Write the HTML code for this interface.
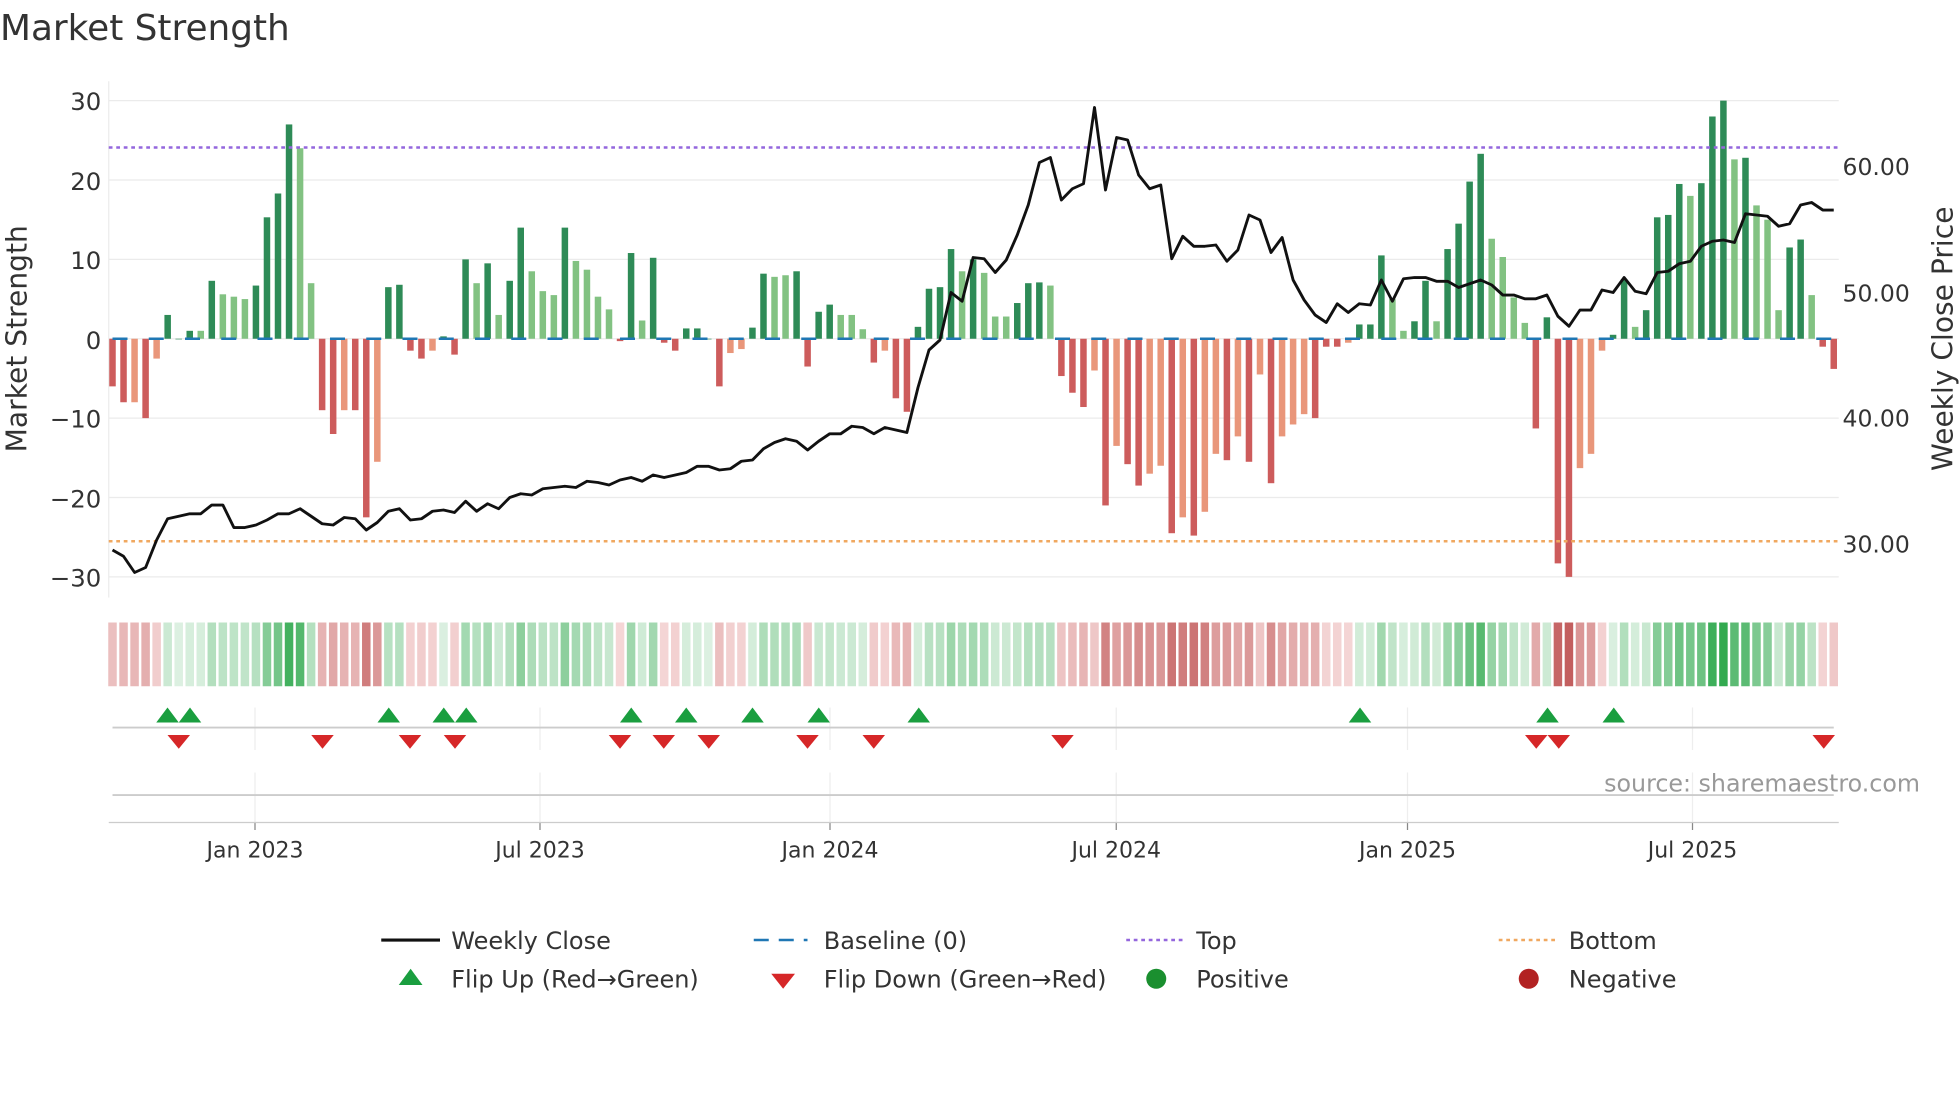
<!DOCTYPE html>
<html><head><meta charset="utf-8"><style>
html,body{margin:0;padding:0;background:#fff;}
svg{display:block;font-family:"DejaVu Sans","Liberation Sans",sans-serif;}
</style></head><body>
<svg id="s" width="1960" height="1102" viewBox="0 0 1568 881.6" xmlns="http://www.w3.org/2000/svg">
<text x="0" y="32" font-size="28.7" fill="#333">Market Strength</text>
<g id="grid"></g>
<g id="bars"></g>
<g id="strip"></g>
<g id="marks"></g>
<g id="line"></g>
<text transform="translate(21,271) rotate(-90)" text-anchor="middle" font-size="22.5" fill="#333">Market Strength</text>
<text transform="translate(1562,271) rotate(-90)" text-anchor="middle" font-size="22.5" fill="#333">Weekly Close Price</text>
<g font-size="19.5" fill="#333" text-anchor="end">
<text x="81" y="88">30</text><text x="81" y="152">20</text><text x="81" y="215">10</text><text x="81" y="279">0</text><text x="81" y="342">−10</text><text x="81" y="406">−20</text><text x="81" y="469">−30</text>
</g>
<g font-size="18.8" fill="#333">
<text x="1474" y="140">60.00</text><text x="1474" y="241">50.00</text><text x="1474" y="341">40.00</text><text x="1474" y="442">30.00</text>
</g>
<g font-size="17.6" fill="#333" text-anchor="middle">
<text x="204" y="686">Jan 2023</text><text x="432" y="686">Jul 2023</text><text x="664" y="686">Jan 2024</text><text x="893" y="686">Jul 2024</text><text x="1126" y="686">Jan 2025</text><text x="1354" y="686">Jul 2025</text>
</g>
<text x="1536" y="633" font-size="19" fill="#999" text-anchor="end">source: sharemaestro.com</text>
<g font-size="19.2" fill="#333">
<line x1="305" y1="752" x2="352" y2="752" stroke="#111" stroke-width="2.5"/><text x="361" y="759">Weekly Close</text>
<line x1="603" y1="752" x2="646" y2="752" stroke="#1f77b4" stroke-width="2" stroke-dasharray="12,8"/><text x="659" y="759">Baseline (0)</text>
<line x1="901" y1="752" x2="946" y2="752" stroke="#9467dd" stroke-width="2" stroke-dasharray="3,3"/><text x="957" y="759">Top</text>
<line x1="1199" y1="752" x2="1244" y2="752" stroke="#f0a860" stroke-width="2" stroke-dasharray="3,3"/><text x="1255" y="759">Bottom</text>
<polygon points="319,788 338,788 328.5,775" fill="#1a9e3f"/><text x="361" y="790">Flip Up (Red→Green)</text>
<polygon points="617,779 636,779 626.5,791" fill="#d62728"/><text x="659" y="790">Flip Down (Green→Red)</text>
<circle cx="925" cy="783" r="8" fill="#1a8f2f"/><text x="957" y="790">Positive</text>
<circle cx="1223" cy="783" r="8" fill="#b22222"/><text x="1255" y="790">Negative</text>
</g>
</svg>
<script>
var NS="http://www.w3.org/2000/svg";
function el(p,t,a){var e=document.createElementNS(NS,t);for(var k in a)e.setAttribute(k,a[k]);document.getElementById(p).appendChild(e);return e;}
var B="-6R -8R -8S -10R -2.5S 3D 0D 1D 1L 7.3D 5.6L 5.3L 5L 6.7D 15.3D 18.3D 27D 24L 7L -9R -12R -9S -9R -22.5R -15.5S 6.5D 6.8D -1.5R -2.5R -1.5S 0.3D -2R 10D 7L 9.5D 3L 7.3D 14D 8.5L 6L 5.5L 14D 9.8L 8.7L 5.3L 3.7L -0.3R 10.8D 2.3L 10.2D -0.5R -1.5R 1.3D 1.3D 0D -6R -1.8S -1.3S 1.4D 8.2D 7.8L 8L 8.5D -3.5R 3.4D 4.3D 3L 3L 1.2L -3R -1.5S -7.5R -9.2R 1.5D 6.3D 6.5D 11.3D 8.5L 10D 8.3L 2.8L 2.8L 4.5D 7D 7.1D 6.7L -4.7R -6.8R -8.6R -4S -21R -13.5S -15.8R -18.5R -17S -16S -24.5R -22.5S -24.8R -21.8S -14.5S -15.3R -12.3S -15.5R -4.5S -18.2R -12.3S -10.8S -9.5S -10R -1R -1R -0.5S 1.8D 1.8D 10.5D 5L 1L 2.2D 7.3D 2.2L 11.3D 14.5D 19.8D 23.3D 12.6L 10.3L 5.2L 2L -11.3R 2.7D -28.3R -30R -16.3S -14.5S -1.5S 0.5D 7.5D 1.5L 3.6D 15.3D 15.6D 19.5D 18L 19.6D 28D 30D 22.6L 22.8D 16.8L 15L 3.6L 11.5D 12.5D 5.5L -1R -3.8R".split(" ");
var n=B.length,x0=90,x1=1467,st=(x1-x0)/(n-1),Z=271,U=6.35;
var col={D:"#2e8b57",L:"#82c282",R:"#cd5c5c",S:"#e9967a"};
for(var v=-30;v<=30;v+=10){var y=Z-v*U;el("grid","line",{x1:87,x2:1471,y1:y,y2:y,stroke:"#ebebeb","stroke-width":1});}
el("grid","line",{x1:87,x2:87,y1:65,y2:478,stroke:"#ebebeb"});
[204,432,664,893,1126,1354].forEach(function(x){el("grid","line",{x1:x,x2:x,y1:566,y2:600,stroke:"#eee"});el("grid","line",{x1:x,x2:x,y1:618,y2:658,stroke:"#eee"});el("grid","line",{x1:x,x2:x,y1:658,y2:664,stroke:"#888"});});
el("grid","line",{x1:90,x2:1467,y1:582,y2:582,stroke:"#ccc","stroke-width":1.5});
el("grid","line",{x1:90,x2:1467,y1:636,y2:636,stroke:"#ccc","stroke-width":1.5});
el("grid","line",{x1:87,x2:1471,y1:658,y2:658,stroke:"#ccc","stroke-width":1});
for(var i=0;i<n;i++){var v=parseFloat(B[i]),t=B[i].slice(-1),x=x0+i*st;
 var h=Math.abs(v)*U;el("bars","rect",{x:x-2.6,y:v>=0?Z-h:Z,width:5.2,height:Math.max(h,0.5),fill:col[t]});
 var a=Math.min(Math.abs(v)/30,1),c;
 if(v>=0){var r=Math.round(220-a*170),g=Math.round(240-a*70),b=Math.round(225-a*145);c="rgb("+r+","+g+","+b+")";}
 else{var r=Math.round(245-a*50),g=Math.round(215-a*120),b=Math.round(215-a*120);c="rgb("+r+","+g+","+b+")";}
 el("strip","rect",{x:x-3.4,y:498,width:6.8,height:51,fill:c});
}
el("bars","line",{x1:90,x2:1467,y1:Z,y2:Z,stroke:"#1f77b4","stroke-width":2,"stroke-dasharray":"12,17"});
el("bars","line",{x1:87,x2:1471,y1:118,y2:118,stroke:"#9467dd","stroke-width":2,"stroke-dasharray":"3,3"});
el("bars","line",{x1:87,x2:1471,y1:433,y2:433,stroke:"#f0a860","stroke-width":2,"stroke-dasharray":"3,3"});
var P=[440,445,458,454,432,415,413,411,411,404,404,422,422,420,416,411,411,407,413,419,420,414,415,424,418,409,407,416,415,409,408,410,401,409,403,407,398,395,396,391,390,389,390,385,386,388,384,382,385,380,382,380,378,373,373,376,375,369,368,359,354,351,353,360,353,347,347,341,342,347,342,344,346,310,280,272,234,241,206,207,218,208,188,164,130,126,160,151,147,86,152,110,112,140,151,148,207,189,197,197,196,209,200,172,176,202,190,224,240,252,258,243,250,243,244,224,241,223,222,222,225,225,230,227,224,228,236,236,239,239,236,253,261,248,248,232,234,222,233,235,218,217,211,209,197,193,192,194,171,172,173,181,179,164,162,168,168];
var m=P.length,ps=(x1-x0)/(m-1),d="";
for(var i=0;i<m;i++)d+=(i?"L":"M")+(x0+i*ps).toFixed(1)+","+P[i];
el("line","path",{d:d,fill:"none",stroke:"#111","stroke-width":2.3,"stroke-linejoin":"round"});
[134,152,311,355,373,505,549,602,655,735,1088,1238,1291].forEach(function(x){el("marks","polygon",{points:(x-9)+",578 "+(x+9)+",578 "+x+",566",fill:"#1a9e3f"});});
[143,258,328,364,496,531,567,646,699,850,1229,1247,1459].forEach(function(x){el("marks","polygon",{points:(x-9)+",588 "+(x+9)+",588 "+x+",599",fill:"#d62728"});});
</script>
</body></html>
